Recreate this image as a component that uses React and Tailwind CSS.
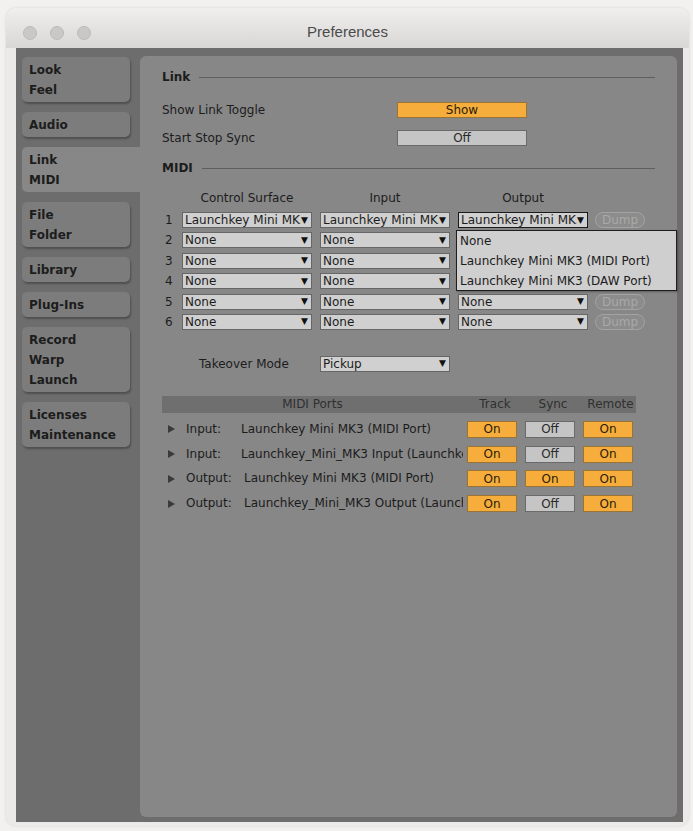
import React from 'react';

const font = { fontFamily: '"DejaVu Sans", "Liberation Sans", sans-serif' };

const tabs = [
  { lines: ['Look', 'Feel'] },
  { lines: ['Audio'] },
  { lines: ['Link', 'MIDI'], active: true },
  { lines: ['File', 'Folder'] },
  { lines: ['Library'] },
  { lines: ['Plug-Ins'] },
  { lines: ['Record', 'Warp', 'Launch'] },
  { lines: ['Licenses', 'Maintenance'] },
];

const LK = 'Launchkey Mini MK3 (MIDI Port)';

const midiRows = [
  { n: 1, cs: LK, inp: LK, out: LK },
  { n: 2, cs: 'None', inp: 'None', out: 'None' },
  { n: 3, cs: 'None', inp: 'None', out: 'None' },
  { n: 4, cs: 'None', inp: 'None', out: 'None' },
  { n: 5, cs: 'None', inp: 'None', out: 'None' },
  { n: 6, cs: 'None', inp: 'None', out: 'None' },
];

const ports = [
  { kind: 'Input:', name: 'Launchkey Mini MK3 (MIDI Port)', pad: 'w-[55px]', nameW: 'w-[222px]', track: true, sync: false, remote: true },
  { kind: 'Input:', name: 'Launchkey_Mini_MK3 Input (Launchkey_Mini_MK3 Input)', pad: 'w-[55px]', nameW: 'w-[222px]', track: true, sync: false, remote: true },
  { kind: 'Output:', name: 'Launchkey Mini MK3 (MIDI Port)', pad: 'w-[58px]', nameW: 'w-[219px]', track: true, sync: true, remote: true },
  { kind: 'Output:', name: 'Launchkey_Mini_MK3 Output (Launchkey_Mini_MK3 Output)', pad: 'w-[58px]', nameW: 'w-[219px]', track: true, sync: false, remote: true },
];

const Dropdown = ({ text, focused, w = 'w-[130px]' }) => (
  <div
    className={`${w} h-[16px] bg-[#d0d0d0] flex items-center pl-[2px] pr-[3px] ${
      focused ? 'border border-[#1a1a1a]' : 'border border-[#666666]'
    }`}
  >
    <span className="flex-1 overflow-hidden whitespace-nowrap leading-[14px] text-[#1c1c1c]">{text}</span>
    <span className="text-[9px] leading-none text-[#111]">▼</span>
  </div>
);

const Toggle = ({ on, label, w = 'w-[50px] h-[17px]' }) => (
  <div
    className={`${w} flex items-center justify-center leading-none border ${
      on ? 'bg-[#f7ad3b] border-[#9a7434] text-[#2a1c08]' : 'bg-[#c5c5c5] border-[#6a6a6a] text-[#2a2a2a]'
    }`}
  >
    {label ?? (on ? 'On' : 'Off')}
  </div>
);

const Dump = () => (
  <div className="w-[50px] h-[16px] rounded-full border border-[#a3a3a3] bg-[#8c8c8c] flex items-center justify-center leading-none text-[#a9a9a9]">
    Dump
  </div>
);

const SectionHeader = ({ title }) => (
  <div className="h-[16px] flex items-center gap-[9px] pr-[22px]">
    <span className="font-bold text-[#1c1c1c] leading-none">{title}</span>
    <div className="flex-1 h-px bg-[#5e5e5e]" />
  </div>
);

export default function App() {
  return (
    <div className="w-[693px] h-[831px] bg-[#f3f1ef] pt-[8px] pl-[6px] text-[12px]" style={font}>
      <div className="w-[683px] h-[818px] rounded-[10px] bg-[#eceae8] shadow-[0_0_3px_rgba(0,0,0,0.12)] flex flex-col">
        {/* title bar */}
        <div className="h-[40px] rounded-t-[10px] bg-gradient-to-b from-[#f1efed] to-[#d9d7d5] relative flex items-center justify-center pt-[9px]">
          <div className="absolute left-[17px] top-[18px] flex gap-[13px]">
            <div className="w-[14px] h-[14px] rounded-full bg-[#cac8c6] border border-[#bdbbb9]" />
            <div className="w-[14px] h-[14px] rounded-full bg-[#cac8c6] border border-[#bdbbb9]" />
            <div className="w-[14px] h-[14px] rounded-full bg-[#cac8c6] border border-[#bdbbb9]" />
          </div>
          <span className="text-[15px] text-[#4a4a4a]" style={{ fontFamily: '"Liberation Sans", "DejaVu Sans", sans-serif' }}>
            Preferences
          </span>
        </div>

        {/* body */}
        <div className="ml-[10px] mr-[6px] mb-[4px] flex-1 bg-[#6d6d6d] flex">
          {/* sidebar */}
          <div className="w-[124px] pl-[6px] pt-[9px] flex flex-col gap-[10px]">
            {tabs.map((t, i) => (
              <div
                key={i}
                className={`pl-[7px] py-[2.5px] flex flex-col font-bold text-[#1c1c1c] ${
                  t.active
                    ? 'w-[118px] bg-[#878787] rounded-l-[5px]'
                    : 'w-[108px] bg-[#7c7c7c] rounded-[5px] shadow-[1px_2px_2px_rgba(0,0,0,0.28)]'
                }`}
              >
                {t.lines.map((l) => (
                  <span key={l} className="h-[20px] leading-[20px]">
                    {l}
                  </span>
                ))}
              </div>
            ))}
          </div>

          {/* content panel */}
          <div className="relative w-[537px] mt-[8px] mb-[5px] bg-[#878787] rounded-[6px] pl-[22px] pt-[13px] text-[#1c1c1c]">
            <SectionHeader title="Link" />

            <div className="mt-[17px] h-[16px] flex items-center">
              <span className="w-[235px] leading-none">Show Link Toggle</span>
              <Toggle on label="Show" w="w-[130px] h-[16px]" />
            </div>
            <div className="mt-[12px] h-[16px] flex items-center">
              <span className="w-[235px] leading-none">Start Stop Sync</span>
              <Toggle on={false} label="Off" w="w-[130px] h-[16px]" />
            </div>

            <div className="mt-[14px]">
              <SectionHeader title="MIDI" />
            </div>

            <div className="mt-[14px] h-[16px] flex items-center leading-none">
              <span className="w-[20px]" />
              <span className="w-[130px] text-center">Control Surface</span>
              <span className="w-[8px]" />
              <span className="w-[130px] text-center">Input</span>
              <span className="w-[8px]" />
              <span className="w-[130px] text-center">Output</span>
            </div>

            <div className="mt-[6px] flex flex-col gap-[4.4px]">
              {midiRows.map((r) => (
                <div key={r.n} className="h-[16px] flex items-center">
                  <span className="w-[20px] pl-[3px] leading-none">{r.n}</span>
                  <Dropdown text={r.cs} />
                  <span className="w-[8px]" />
                  <Dropdown text={r.inp} />
                  <span className="w-[8px]" />
                  <Dropdown text={r.out} focused={r.n === 1} />
                  <span className="w-[7px]" />
                  <Dump />
                </div>
              ))}
            </div>

            {/* output dropdown menu */}
            <div className="absolute left-[316px] top-[174px] w-[221px] h-[61px] bg-[#cfcfcf] border-[1.5px] border-[#1e1e1e] shadow-[1px_1px_2px_rgba(0,0,0,0.3)] flex flex-col justify-center pl-[3px]">
              <span className="h-[20px] leading-[20px]">None</span>
              <span className="h-[20px] leading-[20px]">Launchkey Mini MK3 (MIDI Port)</span>
              <span className="h-[20px] leading-[20px]">Launchkey Mini MK3 (DAW Port)</span>
            </div>

            <div className="mt-[26px] h-[16px] flex items-center">
              <span className="w-[37px]" />
              <span className="w-[121px] leading-none">Takeover Mode</span>
              <Dropdown text="Pickup" />
            </div>

            {/* MIDI ports table */}
            <div className="mt-[24px] w-[474px]">
              <div className="h-[17px] bg-[#6f6f6f] flex items-center leading-none text-[#2f2f2f]">
                <span className="w-[301px] text-center">MIDI Ports</span>
                <span className="w-[58px] text-center pl-[6px]">Track</span>
                <span className="w-[58px] text-center pl-[6px]">Sync</span>
                <span className="w-[57px] text-center pl-[6px]">Remote</span>
              </div>
              <div className="mt-[8px] flex flex-col gap-[7.7px]">
                {ports.map((p, i) => (
                  <div key={i} className="h-[17px] flex items-center">
                    <span className="w-[24px] pl-[6px] flex items-center">
                      <svg width="7" height="8" viewBox="0 0 7 8">
                        <path d="M0 0 L7 4 L0 8 Z" fill="#3a3a3a" />
                      </svg>
                    </span>
                    <span className={`${p.pad} leading-[17px]`}>{p.kind}</span>
                    <span className={`${p.nameW} overflow-hidden whitespace-nowrap leading-[17px]`}>{p.name}</span>
                    <span className="w-[4px]" />
                    <Toggle on={p.track} />
                    <span className="w-[8px]" />
                    <Toggle on={p.sync} />
                    <span className="w-[8px]" />
                    <Toggle on={p.remote} />
                  </div>
                ))}
              </div>
            </div>
          </div>
        </div>
      </div>
    </div>
  );
}
